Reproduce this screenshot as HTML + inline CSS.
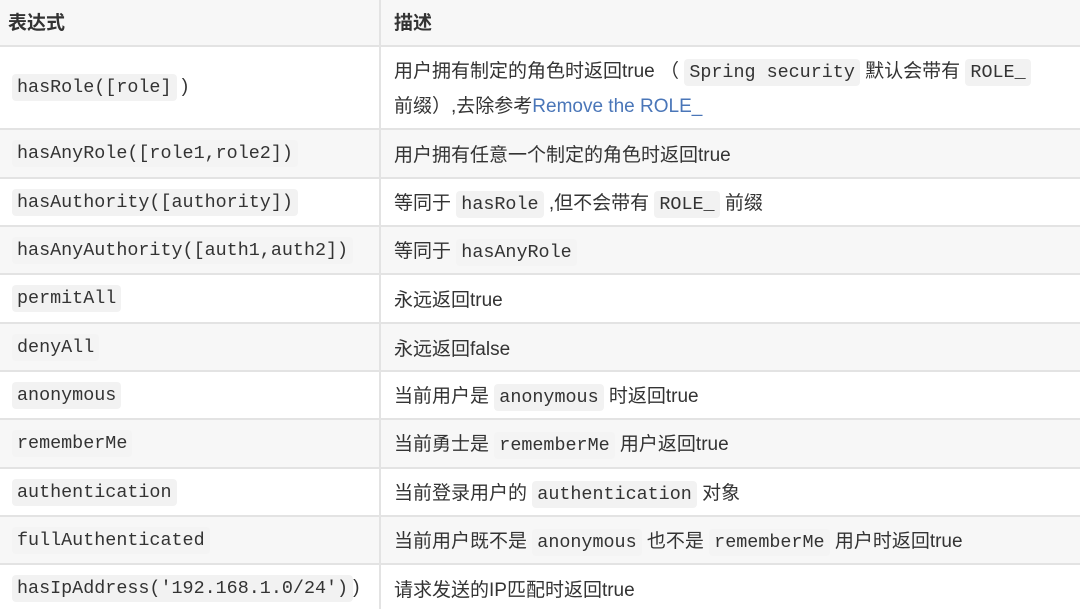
<!DOCTYPE html>
<html><head><meta charset="utf-8"><style>
*{margin:0;padding:0;box-sizing:border-box}
body{width:1080px;height:607px;overflow:hidden;background:#fff;font-family:"Liberation Sans","Noto Sans CJK SC",sans-serif;color:#333;font-size:19px}
.r{position:absolute;left:0;width:1080px;border-top:2px solid #e3e3e3}
.g{background:#f7f7f7}
.c1{position:absolute;left:0;top:0;bottom:0;width:381px;border-right:2px solid #e3e3e3}
.t{position:absolute;white-space:nowrap}
code{font-family:"Liberation Mono",monospace;font-size:18.4px;background:#f2f2f2;border-radius:4px;padding:3px 5px;color:#333}
.g code{background:#f4f4f4}
a{color:#4a76b8;text-decoration:none}
</style></head><body>
<div class="r g" style="top:-2px;height:47px"><div class="c1"></div>
<div class="t" style="left:8px;top:8px;font-weight:bold">表达式</div>
<div class="t" style="left:394px;top:8px;font-weight:bold">描述</div></div>

<div class="r" style="top:45px;height:83px"><div class="c1"></div>
<div class="t" style="left:12px;top:29px"><code>hasRole([role]</code> )</div>
<div class="t" style="left:394px;top:9px">用户拥有制定的角色时返回true （ <code>Spring security</code> 默认会带有 <code>ROLE_</code></div>
<div class="t" style="left:394px;top:44px">前缀）,去除参考<a>Remove the ROLE_</a></div></div>

<div class="r g" style="top:128px;height:49px"><div class="c1"></div>
<div class="t" style="left:12px;top:12px"><code>hasAnyRole([role1,role2])</code></div>
<div class="t" style="left:394px;top:10px">用户拥有任意一个制定的角色时返回true</div></div>

<div class="r" style="top:177px;height:48px"><div class="c1"></div>
<div class="t" style="left:12px;top:12px"><code>hasAuthority([authority])</code></div>
<div class="t" style="left:394px;top:9px">等同于 <code>hasRole</code> ,但不会带有 <code>ROLE_</code> 前缀</div></div>

<div class="r g" style="top:225px;height:48px"><div class="c1"></div>
<div class="t" style="left:12px;top:12px"><code>hasAnyAuthority([auth1,auth2])</code></div>
<div class="t" style="left:394px;top:9px">等同于 <code>hasAnyRole</code></div></div>

<div class="r" style="top:273px;height:49px"><div class="c1"></div>
<div class="t" style="left:12px;top:12px"><code>permitAll</code></div>
<div class="t" style="left:394px;top:10px">永远返回true</div></div>

<div class="r g" style="top:322px;height:48px"><div class="c1"></div>
<div class="t" style="left:12px;top:12px"><code>denyAll</code></div>
<div class="t" style="left:394px;top:10px">永远返回false</div></div>

<div class="r" style="top:370px;height:48px"><div class="c1"></div>
<div class="t" style="left:12px;top:12px"><code>anonymous</code></div>
<div class="t" style="left:394px;top:9px">当前用户是 <code>anonymous</code> 时返回true</div></div>

<div class="r g" style="top:418px;height:49px"><div class="c1"></div>
<div class="t" style="left:12px;top:12px"><code>rememberMe</code></div>
<div class="t" style="left:394px;top:9px">当前勇士是 <code>rememberMe</code> 用户返回true</div></div>

<div class="r" style="top:467px;height:48px"><div class="c1"></div>
<div class="t" style="left:12px;top:12px"><code>authentication</code></div>
<div class="t" style="left:394px;top:9px">当前登录用户的 <code>authentication</code> 对象</div></div>

<div class="r g" style="top:515px;height:48px"><div class="c1"></div>
<div class="t" style="left:12px;top:12px"><code>fullAuthenticated</code></div>
<div class="t" style="left:394px;top:9px">当前用户既不是 <code>anonymous</code> 也不是 <code>rememberMe</code> 用户时返回true</div></div>

<div class="r" style="top:563px;height:46px"><div class="c1"></div>
<div class="t" style="left:12px;top:12px"><code>hasIpAddress('192.168.1.0/24')</code>)</div>
<div class="t" style="left:394px;top:10px">请求发送的IP匹配时返回true</div></div>
</body></html>
